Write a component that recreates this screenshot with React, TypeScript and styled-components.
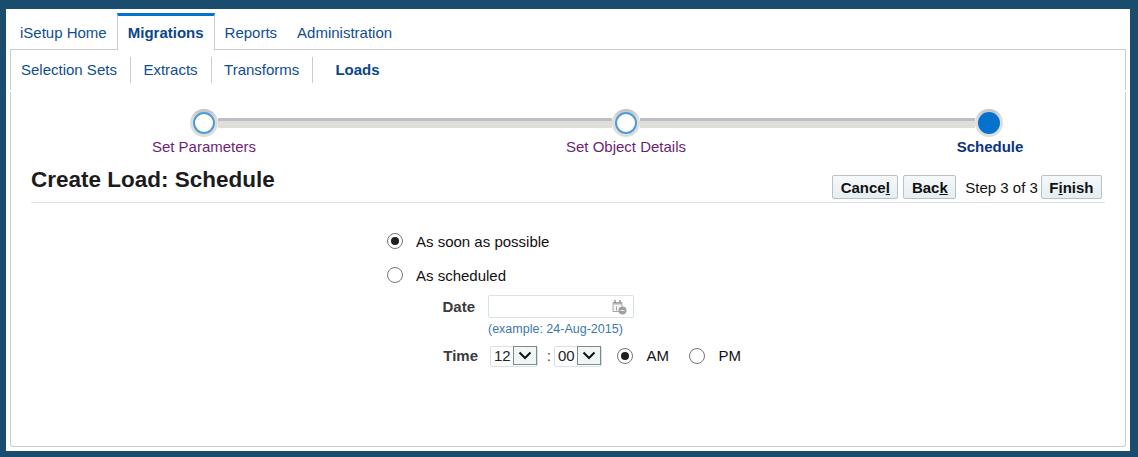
import styled, { createGlobalStyle } from "styled-components";

const GlobalStyle = createGlobalStyle`
  * {
    box-sizing: border-box;
  }

  html,
  body {
    margin: 0;
    padding: 0;
    background: #1a4c6e;
    font-family: "Liberation Sans", Arial, sans-serif;
  }
`;

const tabs = ["iSetup Home", "Migrations", "Reports", "Administration"];
const subTabs = ["Selection Sets", "Extracts", "Transforms", "Loads"];

function App() {
  return (
    <Frame>
      <GlobalStyle />
      <Panel>
        <TabBar>
          {tabs.map((tab) => (
            <Tab key={tab} $active={tab === "Migrations"}>
              {tab}
            </Tab>
          ))}
        </TabBar>
        <SubNav>
          {subTabs.map((tab) => (
            <SubTab key={tab} $active={tab === "Loads"}>
              {tab}
            </SubTab>
          ))}
        </SubNav>
        <Content>
          <Track>
            <StepNode />
            <Connector $width={394} />
            <StepNode />
            <Connector $width={335} />
            <StepNode $current />
          </Track>
          <StepLabels>
            <StepLabel>Set Parameters</StepLabel>
            <StepLabel>Set Object Details</StepLabel>
            <StepLabel $current>Schedule</StepLabel>
          </StepLabels>

          <PageHeader>
            <Title>Create Load: Schedule</Title>
            <Actions>
              <Button>
                Cance<u>l</u>
              </Button>
              <Button>
                Bac<u>k</u>
              </Button>
              <StepText>Step 3 of 3</StepText>
              <Button>
                F<u>i</u>nish
              </Button>
            </Actions>
          </PageHeader>

          <Form>
            <RadioRow>
              <Radio name="when" defaultChecked />
              <RadioLabel>As soon as possible</RadioLabel>
            </RadioRow>
            <RadioRow $top={16}>
              <Radio name="when" />
              <RadioLabel>As scheduled</RadioLabel>
            </RadioRow>
            <DateRow>
              <FieldLabel $width={90}>Date</FieldLabel>
              <DateBox>
                <DateInput type="text" />
                <CalendarIcon viewBox="0 0 16 16">
                  <path d="M2 3.500h9v9H2z" fill="#f6f6f6" stroke="#a8a8a8" />
                  <path d="M2 3.500h9v2H2z" fill="#b4b4b4" />
                  <path d="M4 1v3M9 1v3" stroke="#8c8c8c" strokeWidth="1.400" />
                  <path d="M5.500 7.500v4" stroke="#a6a6a6" />
                  <circle cx="11.500" cy="11.500" r="4" fill="#a0a0a0" />
                  <path d="M9.500 11.500h4" stroke="#ececec" />
                </CalendarIcon>
              </DateBox>
            </DateRow>
            <Example>(example: 24-Aug-2015)</Example>
            <TimeRow>
              <FieldLabel $width={93}>Time</FieldLabel>
              <Select>
                <SelectValue>12</SelectValue>
                <SelectArrow>
                  <Chevron />
                </SelectArrow>
              </Select>
              <Colon>:</Colon>
              <Select>
                <SelectValue>00</SelectValue>
                <SelectArrow>
                  <Chevron />
                </SelectArrow>
              </Select>
              <Radio name="period" defaultChecked $left={15} />
              <PeriodLabel>AM</PeriodLabel>
              <Radio name="period" $left={20} />
              <PeriodLabel>PM</PeriodLabel>
            </TimeRow>
          </Form>
        </Content>
      </Panel>
    </Frame>
  );
}

function Chevron() {
  return (
    <svg width="14" height="9" viewBox="0 0 14 9">
      <path
        d="M1.500 1.500 7 7l5.500-5.500"
        fill="none"
        stroke="#111"
        strokeWidth="2"
      />
    </svg>
  );
}

export default App;

const Frame = styled.div`
  width: 1138px;
  height: 457px;
  padding: 9px 8px 6px 6px;
  background: #1a4c6e;
`;

const Panel = styled.div`
  display: flex;
  flex-direction: column;
  height: 100%;
  padding: 4px;
  background: #ffffff;
`;

const TabBar = styled.div`
  display: flex;
  height: 37px;
  margin-bottom: -1px;
`;

const Tab = styled.div<{ $active?: boolean }>`
  position: relative;
  z-index: ${(p) => (p.$active ? 1 : 0)};
  display: flex;
  align-items: center;
  height: 37px;
  padding: ${(p) => (p.$active ? "0 10px 2px 10px" : "1px 10px 0 10px")};
  font-size: 15px;
  font-weight: ${(p) => (p.$active ? 700 : 400)};
  color: ${(p) => (p.$active ? "#0b4689" : "#0f4d92")};
  background: ${(p) => (p.$active ? "#ffffff" : "transparent")};
  border-top: ${(p) => (p.$active ? "3px solid #0572ce" : "none")};
  border-left: ${(p) => (p.$active ? "1px solid #c4ced7" : "none")};
  border-right: ${(p) => (p.$active ? "1px solid #c4ced7" : "none")};
`;

const SubNav = styled.div`
  display: flex;
  align-items: center;
  height: 41px;
  padding-bottom: 1px;
  border: 1px solid #c4ced7;
  border-bottom: none;
`;

const SubTab = styled.div<{ $active?: boolean }>`
  display: flex;
  align-items: center;
  height: 26px;
  padding: 0 13px 0 ${(p) => (p.$active ? "22px" : "12.500px")};
  font-size: 15px;
  font-weight: ${(p) => (p.$active ? 700 : 400)};
  color: ${(p) => (p.$active ? "#0b4689" : "#0f4d92")};
  border-right: ${(p) => (p.$active ? "none" : "1px solid #c4ced7")};

  &:first-child {
    padding-left: 10px;
  }
`;

const Content = styled.div`
  flex: 1;
  display: flex;
  flex-direction: column;
  margin-top: 2px;
  padding: 17px 20px 0 20px;
  border: 1px solid #c4ced7;
  border-top: none;
  border-radius: 0 0 3px 3px;
`;

const Track = styled.div`
  display: flex;
  align-items: center;
  height: 28px;
  margin-left: 159px;
`;

const StepNode = styled.div<{ $current?: boolean }>`
  flex: none;
  display: flex;
  align-items: center;
  justify-content: center;
  width: 28px;
  height: 28px;
  border-radius: 50%;
  background: linear-gradient(#bfc2c9 0%, #dfded8 35%);

  &::after {
    content: "";
    width: 18px;
    height: 18px;
    border-radius: 50%;
    background: ${(p) => (p.$current ? "#0572ce" : "#ffffff")};
    border: 2px solid ${(p) => (p.$current ? "#0572ce" : "#4f9dd8")};
  }
`;

const Connector = styled.div<{ $width: number }>`
  flex: none;
  width: ${(p) => p.$width}px;
  height: 10px;
  background: #dfded8;
  border-top: 3px solid #bdbfc6;
`;

const StepLabels = styled.div`
  display: grid;
  grid-template-columns: 200px 644px 84px;
  align-items: center;
  height: 20px;
  margin: -1px 0 0 73px;
`;

const StepLabel = styled.div<{ $current?: boolean }>`
  text-align: center;
  font-size: 15px;
  font-weight: ${(p) => (p.$current ? 700 : 400)};
  color: ${(p) => (p.$current ? "#0a3480" : "#6d1f73")};
`;

const PageHeader = styled.div`
  display: flex;
  align-items: center;
  justify-content: space-between;
  height: 37px;
  margin-top: 10px;
  padding: 6px 3px 0 0;
  border-bottom: 1px solid #dbe4eb;
`;

const Title = styled.h1`
  margin: 0 0 15px 0;
  font-size: 22.500px;
  font-weight: 700;
  color: #1c1c1c;
`;

const Actions = styled.div`
  display: flex;
  align-items: center;
`;

const Button = styled.button`
  height: 24px;
  margin-right: 5px;
  padding: 0 7.500px;
  font-family: inherit;
  font-size: 15px;
  font-weight: 700;
  color: #111111;
  background: linear-gradient(#f6f9fa, #e4eef1);
  border: 1px solid #b8c0c8;
  border-radius: 2px;

  &:last-child {
    margin-right: 0;
  }
`;

const StepText = styled.span`
  margin: 0 3px 0 4px;
  font-size: 15px;
  color: #111111;
`;

const Form = styled.div`
  display: flex;
  flex-direction: column;
  padding: 29px 0 0 356px;
`;

const RadioRow = styled.div<{ $top?: number }>`
  display: flex;
  align-items: center;
  height: 18px;
  margin-top: ${(p) => p.$top ?? 0}px;
`;

const Radio = styled.input.attrs({ type: "radio" })<{ $left?: number }>`
  appearance: none;
  flex: none;
  display: flex;
  align-items: center;
  justify-content: center;
  width: 16px;
  height: 16px;
  margin: 0 0 0 ${(p) => p.$left ?? 0}px;
  background: #ffffff;
  border: 1px solid #767676;
  border-radius: 50%;

  &:checked::before {
    content: "";
    width: 8px;
    height: 8px;
    border-radius: 50%;
    background: #1f1f1f;
  }
`;

const RadioLabel = styled.span`
  margin-left: 13px;
  font-size: 15px;
  color: #111111;
`;

const DateRow = styled.div`
  display: flex;
  align-items: center;
  height: 23px;
  margin-top: 11px;
`;

const FieldLabel = styled.span<{ $width: number }>`
  width: ${(p) => p.$width}px;
  padding-right: 2px;
  text-align: right;
  font-size: 15px;
  font-weight: 700;
  color: #3b3b3b;
`;

const DateBox = styled.div`
  display: flex;
  align-items: center;
  width: 146px;
  height: 23px;
  margin-left: 11px;
  padding: 0 6px 0 2px;
  border: 1px solid #d6e2ea;
  border-radius: 2px;
`;

const DateInput = styled.input`
  flex: 1;
  min-width: 0;
  height: 100%;
  border: none;
  outline: none;
  background: transparent;
`;

const CalendarIcon = styled.svg`
  flex: none;
  width: 16px;
  height: 16px;
`;

const Example = styled.div`
  margin: 4px 0 0 101px;
  font-size: 12.500px;
  line-height: 14px;
  color: #3c78ac;
`;

const PeriodLabel = styled.span`
  margin: 0 0 2px 13.500px;
  font-size: 15px;
  color: #111111;
`;

const TimeRow = styled.div`
  display: flex;
  align-items: center;
  height: 22px;
  margin-top: 9px;

  ${FieldLabel} {
    margin-bottom: 2px;
  }
`;

const Select = styled.div`
  display: flex;
  align-items: stretch;
  width: 48px;
  height: 21px;
  border: 1px solid #d6e2ea;
  border-radius: 2px;

  ${FieldLabel} + & {
    margin-left: 10px;
  }
`;

const SelectValue = styled.span`
  flex: 1;
  padding-left: 3px;
  font-size: 15px;
  line-height: 18px;
  color: #222222;
`;

const SelectArrow = styled.span`
  flex: none;
  display: flex;
  align-items: center;
  justify-content: center;
  width: 24px;
  margin: -1px 0 1px 0;
  background: #eff6f5;
  border: 1px solid #7d8a8c;
`;

const Colon = styled.span`
  width: 16px;
  padding-left: 9px;
  font-size: 14px;
  color: #333333;
`;
